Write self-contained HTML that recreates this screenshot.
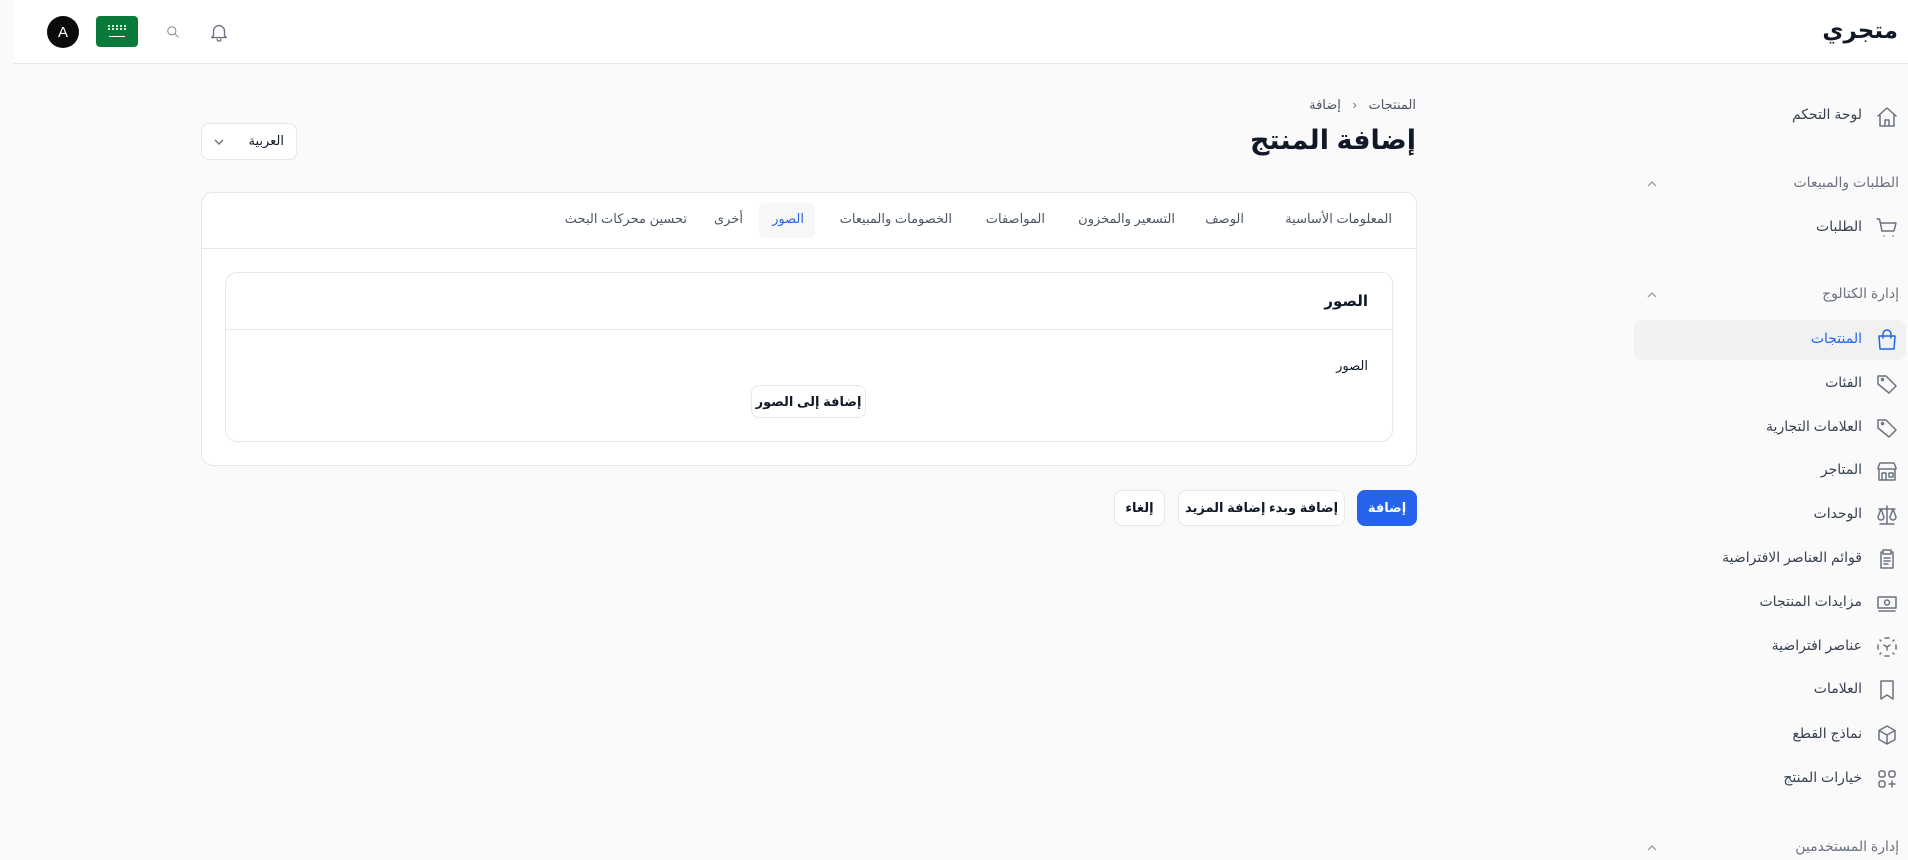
<!DOCTYPE html>
<html><head><meta charset="utf-8">
<style>
*{box-sizing:border-box;margin:0;padding:0}
body{width:1908px;height:860px;overflow:hidden;background:#fafafa;font-family:"Liberation Sans","DejaVu Sans",sans-serif;color:#111827;position:relative}
.a{position:absolute;white-space:nowrap}
.hdr{position:absolute;left:14px;top:0;width:1894px;height:64px;background:#fff;border-bottom:1px solid #e5e7eb}
.side{font-size:14px;color:#374151;direction:rtl}
.sec{font-size:14px;color:#6b7280;direction:rtl}
.ic{position:absolute;width:24px;height:24px;fill:none;stroke:#6b7280;stroke-width:1.5;stroke-linecap:round;stroke-linejoin:round}
.chev{position:absolute;width:14px;height:14px;fill:none;stroke:#9ca3af;stroke-width:1.5}
.card{position:absolute;background:#fff;border:1px solid #e5e7eb;border-radius:12px}
.tab{position:absolute;top:211px;font-size:13px;color:#4b5563;direction:rtl}
.btn{position:absolute;background:#fff;border:1px solid #e5e7eb;border-radius:8px;font-size:13px;font-weight:bold;display:flex;align-items:center;justify-content:center;direction:rtl}
</style></head><body>
<div class="hdr"></div>
<div class="a" style="right:10px;top:17px;font-size:23px;font-weight:600;direction:rtl">متجري</div>
<div class="a" style="left:47px;top:16px;width:32px;height:32px;border-radius:50%;background:#0b0b0b;color:#fff;font-size:15px;display:flex;align-items:center;justify-content:center">A</div>
<div class="a" style="left:96px;top:16px;width:42px;height:31px;border-radius:4px;background:#0a7a3a"><div style="position:absolute;left:12px;top:9px;width:18px;height:5px;border-top:2px dotted #fff;border-bottom:2px dotted #fff;opacity:.85"></div><div style="position:absolute;left:13px;top:20px;width:16px;height:1px;background:#fff"></div></div>
<svg class="ic" style="left:166px;top:25px;width:14px;height:14px" viewBox="0 0 24 24"><circle cx="10" cy="10" r="7"/><path d="M15 15l6 6"/></svg>
<svg class="ic" style="left:208px;top:21px;width:22px;height:22px" viewBox="0 0 24 24"><path d="M6 16V11a6 6 0 0112 0v5l2 2H4z M10 20a2 2 0 004 0"/></svg>

<div class="a" style="left:1634px;top:320px;width:272px;height:40px;background:#f1f1f1;border-radius:8px"></div>
<svg class="ic" style="right:9px;top:105px" viewBox="0 0 24 24"><path d="M3 11l9-8 9 8M5 9.5V21h14V9.5M10 21v-6h4v6"/></svg>
<div class="a side" style="right:46px;top:106px">لوحة التحكم</div>
<div class="a sec" style="right:9px;top:174px">الطلبات والمبيعات</div>
<svg class="chev" style="left:1645px;top:177px" viewBox="0 0 14 14"><path d="M3 9l4-4 4 4"/></svg>
<svg class="ic" style="right:9px;top:216px" viewBox="0 0 24 24"><path d="M2 3h2.5l2.5 12h12l2-8H6M9 20h.01M18 20h.01"/></svg>
<div class="a side" style="right:46px;top:218px">الطلبات</div>
<div class="a sec" style="right:9px;top:285px">إدارة الكتالوج</div>
<svg class="chev" style="left:1645px;top:288px" viewBox="0 0 14 14"><path d="M3 9l4-4 4 4"/></svg>
<svg class="ic" style="right:9px;top:328px;stroke:#2563eb" viewBox="0 0 24 24"><path d="M4 8h16l-1 13H5zM8 10V6a4 4 0 018 0v4"/></svg>
<div class="a side" style="right:46px;top:330px;color:#2563eb">المنتجات</div>
<svg class="ic" style="right:9px;top:372px" viewBox="0 0 24 24"><path d="M3 12V4h8l10 10-7 7z"/><circle cx="7.5" cy="7.5" r="1"/></svg>
<div class="a side" style="right:46px;top:374px">الفئات</div>
<svg class="ic" style="right:9px;top:416px" viewBox="0 0 24 24"><path d="M3 12V4h8l10 10-7 7z"/><circle cx="7.5" cy="7.5" r="1"/></svg>
<div class="a side" style="right:46px;top:418px">العلامات التجارية</div>
<svg class="ic" style="right:9px;top:459px" viewBox="0 0 24 24"><path d="M3 9l2-5h14l2 5v1H3zM4 10v11h16V10M7 21v-7h4v7M14 14h4v4h-4z"/></svg>
<div class="a side" style="right:46px;top:461px">المتاجر</div>
<svg class="ic" style="right:9px;top:503px" viewBox="0 0 24 24"><path d="M12 3v18M5 21h14M4 6h16M6 6l-3 8a3 3 0 006 0zM18 6l-3 8a3 3 0 006 0z"/></svg>
<div class="a side" style="right:46px;top:505px">الوحدات</div>
<svg class="ic" style="right:9px;top:547px" viewBox="0 0 24 24"><path d="M8 5H6v16h12V5h-2M8 3h8v4H8zM9 11h6M9 14h6M9 17h4"/></svg>
<div class="a side" style="right:46px;top:549px">قوائم العناصر الافتراضية</div>
<svg class="ic" style="right:9px;top:591px" viewBox="0 0 24 24"><path d="M3 6h18v11H3zM4 20h16"/><circle cx="12" cy="11.5" r="2.5"/></svg>
<div class="a side" style="right:46px;top:593px">مزايدات المنتجات</div>
<svg class="ic" style="right:9px;top:635px" viewBox="0 0 24 24"><path d="M10 3h4M10 21h4M3 10v4M21 10v4M5 5l1 1M18 6l1-1M5 19l1-1M18 18l1 1M9 10l3 2 3-2M12 12v3"/></svg>
<div class="a side" style="right:46px;top:637px">عناصر افتراضية</div>
<svg class="ic" style="right:9px;top:678px" viewBox="0 0 24 24"><path d="M6 3h12v18l-6-4-6 4z"/></svg>
<div class="a side" style="right:46px;top:680px">العلامات</div>
<svg class="ic" style="right:9px;top:723px" viewBox="0 0 24 24"><path d="M12 3l8 4.5v9L12 21l-8-4.5v-9zM4 7.5l8 4.5 8-4.5M12 12v9"/></svg>
<div class="a side" style="right:46px;top:725px">نماذج القطع</div>
<svg class="ic" style="right:9px;top:767px" viewBox="0 0 24 24"><rect x="4" y="4" width="6" height="6" rx="2"/><rect x="14" y="4" width="6" height="6" rx="2"/><rect x="4" y="14" width="6" height="6" rx="2"/><path d="M17 14v6M14 17h6"/></svg>
<div class="a side" style="right:46px;top:769px">خيارات المنتج</div>
<div class="a sec" style="right:9px;top:838px">إدارة المستخدمين</div>
<svg class="chev" style="left:1645px;top:841px" viewBox="0 0 14 14"><path d="M3 9l4-4 4 4"/></svg>

<div class="a" style="right:492px;top:97px;font-size:13px;color:#4b5563;direction:rtl">المنتجات <span style="display:inline-block;margin:0 8px;color:#6b7280">&#8249;</span> إضافة</div>
<div class="a" style="right:492px;top:125px;font-size:27px;font-weight:bold;direction:rtl">إضافة المنتج</div>
<div class="a" style="left:201px;top:123px;width:96px;height:37px;background:#fff;border:1px solid #e5e7eb;border-radius:8px"></div>
<div class="a" style="right:1624px;top:133px;font-size:13px;direction:rtl">العربية</div>
<svg class="chev" style="left:212px;top:135px;stroke:#6b7280" viewBox="0 0 14 14"><path d="M3 5l4 4 4-4"/></svg>

<div class="card" style="left:201px;top:192px;width:1216px;height:274px"></div>
<div class="a" style="left:202px;top:248px;width:1214px;height:1px;background:#e5e7eb"></div>
<div class="a" style="left:759px;top:203px;width:56px;height:35px;background:#f7f7f7;border-radius:6px"></div>
<div class="tab" style="right:516px">المعلومات الأساسية</div>
<div class="tab" style="right:664px">الوصف</div>
<div class="tab" style="right:733px">التسعير والمخزون</div>
<div class="tab" style="right:863px">المواصفات</div>
<div class="tab" style="right:956px">الخصومات والمبيعات</div>
<div class="tab" style="right:1104px;color:#2563eb">الصور</div>
<div class="tab" style="right:1165px">أخرى</div>
<div class="tab" style="right:1221px">تحسين محركات البحث</div>

<div class="card" style="left:225px;top:272px;width:1168px;height:170px"></div>
<div class="a" style="left:226px;top:329px;width:1166px;height:1px;background:#e5e7eb"></div>
<div class="a" style="right:540px;top:292px;font-size:15px;font-weight:bold;direction:rtl">الصور</div>
<div class="a" style="right:540px;top:358px;font-size:13px;direction:rtl">الصور</div>
<div class="btn" style="left:751px;top:385px;width:115px;height:33px">إضافة إلى الصور</div>

<div class="btn" style="left:1357px;top:490px;width:60px;height:36px;background:#2563eb;border-color:#2563eb;color:#fff">إضافة</div>
<div class="btn" style="left:1178px;top:490px;width:167px;height:36px">إضافة وبدء إضافة المزيد</div>
<div class="btn" style="left:1114px;top:490px;width:51px;height:36px">إلغاء</div>
</body></html>
